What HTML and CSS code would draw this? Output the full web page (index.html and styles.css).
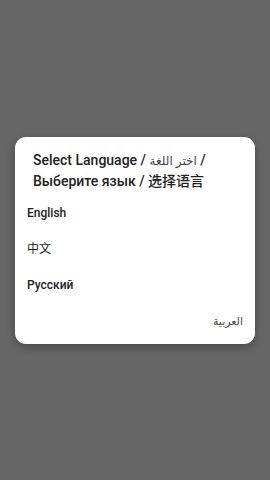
FILE: index.html
```html
<!DOCTYPE html>
<html lang="en">
<head>
    <meta charset="UTF-8">
    <meta name="viewport" content="width=device-width, initial-scale=1.0">
    <title>Select Language</title>
    <link rel="stylesheet" href="styles.css">
</head>
<body>

<div class="overlay">
    <div class="dialog">
        <div class="dialog-title">Select Language / <span dir="rtl">اختر اللغة</span> / Выберите язык / 选择语言</div>
        <div class="lang-list">
            <div class="lang-item medium">English</div>
            <div class="lang-item">中文</div>
            <div class="lang-item medium">Русский</div>
            <div class="lang-item rtl" dir="rtl">العربية</div>
        </div>
    </div>
</div>

</body>
</html>
```

FILE: styles.css
```css
* {
    box-sizing: border-box;
}

body {
    margin: 0;
    font-family: Roboto, "Noto Sans", "Noto Sans CJK SC", sans-serif;
}

.overlay {
    width: 270px;
    height: 480px;
    background-color: #666666;
    padding: 137px 15px 0 15px;
}

.dialog {
    width: 240px;
    height: 207px;
    background-color: #fff;
    border-radius: 11px;
    box-shadow: 0px 3px 8px rgba(0, 0, 0, 0.3);
    padding: 13px 0 0 0;
}

.dialog-title {
    padding: 0 14px 0 18px;
    font-size: 14px;
    line-height: 20px;
    font-weight: 500;
    color: #222;
}

.dialog-title span {
    font-weight: 400;
    font-family: "Noto Sans", "DejaVu Sans", sans-serif;
    font-size: 12px;
    line-height: 20px;
    color: #444;
}

.lang-list {
    padding-top: 4px;
}

.lang-item {
    height: 36px;
    line-height: 36px;
    padding: 0 12px;
    font-size: 12px;
    color: #222;
}

.lang-item.medium {
    font-weight: 500;
}

.lang-item.rtl {
    text-align: right;
    color: #444;
    font-family: "Noto Sans", "DejaVu Sans", sans-serif;
    font-size: 11px;
}
```
